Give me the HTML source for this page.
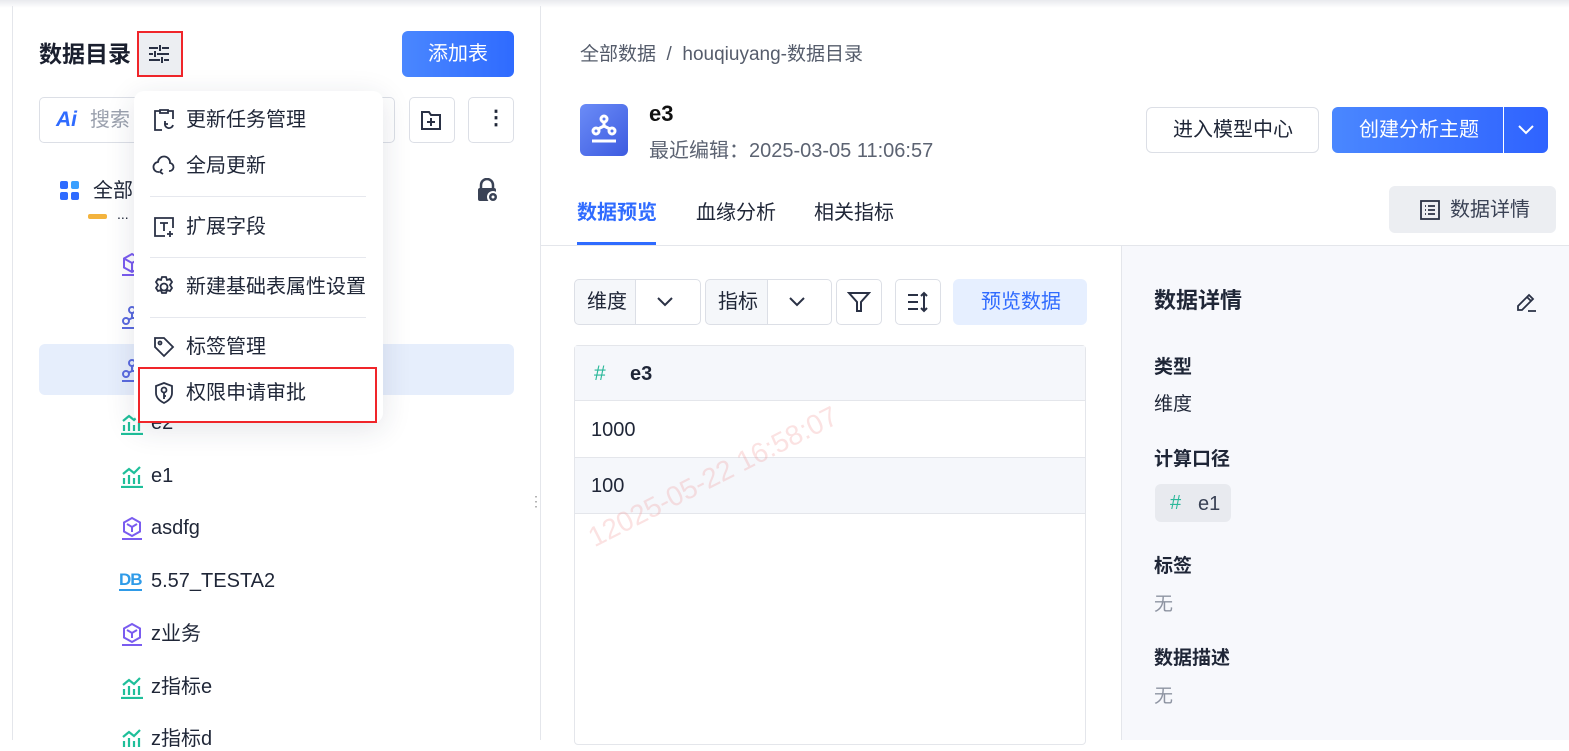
<!DOCTYPE html>
<html><head><meta charset="utf-8"><style>
*{margin:0;padding:0;box-sizing:border-box}
body{width:1569px;height:740px;overflow:hidden;background:#fff;font-family:"Liberation Sans","Noto Sans CJK SC",sans-serif;color:#1f2637;position:relative}
.a{position:absolute}
.t{position:absolute;white-space:nowrap;line-height:1}
.btn{position:absolute;border:1px solid #dcdfe6;border-radius:5px;background:#fff}
svg{position:absolute}
</style></head><body>
<div class="a" style="left:0;top:0;width:1569px;height:8px;background:linear-gradient(#e9eaee,#fff)"></div>
<div class="a" style="left:12px;top:6px;width:1px;height:734px;background:#e4e6eb"></div>
<div class="a" style="left:540px;top:6px;width:1px;height:734px;background:#e4e6eb"></div>

<div class="t" style="left:39px;top:43px;font-size:23px;font-weight:bold;color:#1a1f2e">数据目录</div>
<div class="a" style="left:137px;top:31px;width:46px;height:46px;background:#eceef2;border:2px solid #f0252a"></div>
<svg style="left:147px;top:42px" width="24" height="24" viewBox="0 0 24 24" fill="none" stroke="#2a3145" stroke-width="2"><path d="M2 6h9M15 6h7M13 3v6M2 12h4M10 12h12M8 9v6M2 18h11M17 18h5M15 15v6"/></svg>
<div class="a" style="left:402px;top:31px;width:112px;height:46px;border-radius:6px;background:linear-gradient(90deg,#4a87ff,#2f6bff)"></div>
<div class="t" style="left:428px;top:44px;font-size:20px;color:#fff">添加表</div>

<div class="btn" style="left:39px;top:97px;width:356px;height:46px"></div>
<div class="t" style="left:56px;top:109px;font-size:21px;font-weight:bold;font-style:italic;color:#2f6bff">Ai</div>
<div class="t" style="left:90px;top:110px;font-size:20px;color:#9aa0ad">搜索</div>
<div class="btn" style="left:409px;top:97px;width:46px;height:46px"></div>
<svg style="left:420px;top:109px" width="22" height="22" viewBox="0 0 22 22" fill="none" stroke="#2a3145" stroke-width="2"><path d="M2 3h7l2 3h9v14H2z M11 9v8M7 13h8"/></svg>
<div class="btn" style="left:468px;top:97px;width:46px;height:46px"></div>
<div class="t" style="left:486px;top:108px;font-size:20px;font-weight:bold">⋮</div>

<div class="a" style="left:60px;top:181px;width:8px;height:8px;background:#2f6bff;border-radius:2px;box-shadow:11px 0 0 #3aa0ff,0 11px 0 #2f6bff,11px 11px 0 #2f6bff"></div>
<div class="t" style="left:93px;top:181px;font-size:20px">全部</div>
<svg style="left:475px;top:178px" width="26" height="26" viewBox="0 0 26 26"><path d="M6 10V7a6 6 0 0112 0v3" fill="none" stroke="#3a4255" stroke-width="2.5"/><rect x="3" y="10" width="18" height="13" rx="2" fill="#3a4255"/><circle cx="18" cy="19" r="6" fill="#fff"/><circle cx="18" cy="19" r="4" fill="#3a4255"/><circle cx="18" cy="19" r="1.5" fill="#fff"/></svg>
<div class="a" style="left:88px;top:214px;width:19px;height:5px;background:#f3b33d;border-radius:2px"></div>
<div class="t" style="left:117px;top:207px;font-size:14px">...</div>

<div class="a" style="left:39px;top:344px;width:475px;height:51px;background:#e6eefc;border-radius:6px"></div>

<div class="t" style="left:151px;top:413px;font-size:20px">e2</div>
<div class="t" style="left:151px;top:466px;font-size:20px">e1</div>
<div class="t" style="left:151px;top:518px;font-size:20px">asdfg</div>
<div class="t" style="left:151px;top:571px;font-size:20px">5.57_TESTA2</div>
<div class="t" style="left:151px;top:624px;font-size:20px">z业务</div>
<div class="t" style="left:151px;top:677px;font-size:20px">z指标e</div>
<div class="t" style="left:151px;top:729px;font-size:20px">z指标d</div>
<svg style="left:120px;top:252px" width="24" height="24" viewBox="0 0 24 24" fill="none" stroke="#7a5cf0" stroke-width="2"><path d="M12 2l8 4.5v9L12 20l-8-4.5v-9z M4 6.5l8 4.5 8-4.5M12 11v9"/><path d="M2 23h20"/></svg>
<svg style="left:120px;top:305px" width="24" height="24" viewBox="0 0 24 24" fill="none" stroke="#5a6adf" stroke-width="2"><circle cx="12" cy="5" r="3"/><circle cx="6" cy="16" r="3"/><path d="M12 8v5l-4 2M12 13h5"/><path d="M2 23h20"/></svg>
<svg style="left:120px;top:358px" width="24" height="24" viewBox="0 0 24 24" fill="none" stroke="#5a6adf" stroke-width="2"><circle cx="12" cy="5" r="3"/><circle cx="6" cy="16" r="3"/><path d="M12 8v5l-4 2M12 13h5"/><path d="M2 23h20"/></svg>
<svg style="left:120px;top:411px" width="24" height="24" viewBox="0 0 24 24" fill="none" stroke="#1fbf9a" stroke-width="2.2"><path d="M4 20v-6M9 20v-9M14 20v-6M19 20v-9M3 10l6-5 5 4 6-6"/><path d="M1 23h22"/></svg>
<svg style="left:120px;top:464px" width="24" height="24" viewBox="0 0 24 24" fill="none" stroke="#1fbf9a" stroke-width="2.2"><path d="M4 20v-6M9 20v-9M14 20v-6M19 20v-9M3 10l6-5 5 4 6-6"/><path d="M1 23h22"/></svg>
<svg style="left:120px;top:516px" width="24" height="24" viewBox="0 0 24 24" fill="none" stroke="#7a5cf0" stroke-width="2"><path d="M12 2l8 4.5v9L12 20l-8-4.5v-9z M7 8l5 3 5-3M12 11v5"/><path d="M2 23h20"/></svg>
<div class="t" style="left:119px;top:571px;font-size:17px;font-weight:bold;color:#2f9be8;letter-spacing:-1px;border-bottom:2px solid #2f9be8;padding-bottom:1px">DB</div>
<svg style="left:120px;top:622px" width="24" height="24" viewBox="0 0 24 24" fill="none" stroke="#7a5cf0" stroke-width="2"><path d="M12 2l8 4.5v9L12 20l-8-4.5v-9z M7 8l5 3 5-3M12 11v5"/><path d="M2 23h20"/></svg>
<svg style="left:120px;top:675px" width="24" height="24" viewBox="0 0 24 24" fill="none" stroke="#1fbf9a" stroke-width="2.2"><path d="M4 20v-6M9 20v-9M14 20v-6M19 20v-9M3 10l6-5 5 4 6-6"/><path d="M1 23h22"/></svg>
<svg style="left:120px;top:727px" width="24" height="24" viewBox="0 0 24 24" fill="none" stroke="#1fbf9a" stroke-width="2.2"><path d="M4 20v-6M9 20v-9M14 20v-6M19 20v-9M3 10l6-5 5 4 6-6"/></svg>
<div class="t" style="left:529px;top:494px;font-size:14px;color:#999">⋮</div>

<div class="a" style="left:134px;top:91px;width:249px;height:332px;background:#fff;border-radius:10px;box-shadow:0 6px 30px rgba(30,40,70,.12)"></div>
<div class="a" style="left:150px;top:196px;width:216px;height:1px;background:#e6e8ee"></div>
<div class="a" style="left:150px;top:257px;width:216px;height:1px;background:#e6e8ee"></div>
<div class="a" style="left:150px;top:317px;width:216px;height:1px;background:#e6e8ee"></div>
<div class="t" style="left:186px;top:110px;font-size:20px">更新任务管理</div>
<div class="t" style="left:186px;top:156px;font-size:20px">全局更新</div>
<div class="t" style="left:186px;top:217px;font-size:20px">扩展字段</div>
<div class="t" style="left:186px;top:277px;font-size:20px">新建基础表属性设置</div>
<div class="t" style="left:186px;top:337px;font-size:20px">标签管理</div>
<div class="t" style="left:186px;top:383px;font-size:20px">权限申请审批</div>
<svg style="left:152px;top:108px" width="24" height="24" viewBox="0 0 24 24" fill="none" stroke="#2a3145" stroke-width="1.8"><path d="M8 3H3v19h7M16 3h5v8M8 2h8v3H8z"/><path d="M13 15a4 4 0 108 2M13 13v3h3"/></svg>
<svg style="left:152px;top:154px" width="24" height="24" viewBox="0 0 24 24" fill="none" stroke="#2a3145" stroke-width="1.8"><path d="M7 18a5 5 0 01-1-10 6 6 0 0112 1 4 4 0 01-1 8"/><path d="M10 15l-2 3 3 2"/></svg>
<svg style="left:152px;top:215px" width="24" height="24" viewBox="0 0 24 24" fill="none" stroke="#2a3145" stroke-width="1.8"><path d="M13 21H3V3h18v10M8 8h8M12 8v8M18 16v6M15 19h6"/></svg>
<svg style="left:152px;top:275px" width="24" height="24" viewBox="0 0 24 24" fill="none" stroke="#2a3145" stroke-width="1.8"><circle cx="12" cy="12" r="3.5"/><path d="M10 2h4l1 3 3-1 2 3-2 3 2 3-2 3-3-1-1 3h-4l-1-3-3 1-2-3 2-3-2-3 2-3 3 1z"/></svg>
<svg style="left:152px;top:335px" width="24" height="24" viewBox="0 0 24 24" fill="none" stroke="#2a3145" stroke-width="1.8"><path d="M3 3h9l9 9-9 9-9-9z"/><circle cx="8" cy="8" r="1.5"/></svg>
<svg style="left:152px;top:381px" width="24" height="24" viewBox="0 0 24 24" fill="none" stroke="#2a3145" stroke-width="1.8"><path d="M12 2l8 3v7c0 5-4 8-8 10-4-2-8-5-8-10V5z"/><circle cx="12" cy="9" r="2.5"/><path d="M12 11.5V18M12 15h2"/></svg>
<div class="a" style="left:138px;top:367px;width:239px;height:56px;border:2px solid #f0252a"></div>

<div class="t" style="left:580px;top:45px;font-size:19px;color:#555c6b">全部数据 &nbsp;/&nbsp; houqiuyang-数据目录</div>
<div class="a" style="left:580px;top:104px;width:48px;height:52px;border-radius:6px;background:linear-gradient(135deg,#6b8cf7,#3d5be0)"></div>
<svg style="left:580px;top:104px" width="48" height="52" viewBox="0 0 48 52" fill="none" stroke="#fff" stroke-width="3"><circle cx="24" cy="15" r="3"/><circle cx="16" cy="27" r="3"/><circle cx="32" cy="27" r="3"/><path d="M24 18v4l-6 3M24 22l6 3M12 37h24"/></svg>
<div class="t" style="left:649px;top:103px;font-size:22px;font-weight:bold;color:#111">e3</div>
<div class="t" style="left:649px;top:141px;font-size:20px;color:#5c6372">最近编辑：2025-03-05 11:06:57</div>

<div class="btn" style="left:1146px;top:107px;width:173px;height:46px;border-radius:6px"></div>
<div class="t" style="left:1173px;top:120px;font-size:20px">进入模型中心</div>
<div class="a" style="left:1332px;top:107px;width:216px;height:46px;border-radius:6px;background:linear-gradient(90deg,#4a87ff,#2f63ff)"></div>
<div class="a" style="left:1503px;top:107px;width:1px;height:46px;background:#fff"></div>
<div class="t" style="left:1359px;top:120px;font-size:20px;color:#fff">创建分析主题</div>
<svg style="left:1516px;top:122px" width="20" height="16" viewBox="0 0 20 16" fill="none" stroke="#fff" stroke-width="2"><path d="M3 4l7 7 7-7"/></svg>

<div class="t" style="left:577px;top:203px;font-size:20px;font-weight:bold;color:#2f6bff">数据预览</div>
<div class="a" style="left:577px;top:242px;width:79px;height:3px;background:#2f6bff"></div>
<div class="t" style="left:696px;top:203px;font-size:20px">血缘分析</div>
<div class="t" style="left:814px;top:203px;font-size:20px">相关指标</div>
<div class="a" style="left:1389px;top:186px;width:167px;height:47px;border-radius:6px;background:#eceef2"></div>
<svg style="left:1419px;top:199px" width="22" height="22" viewBox="0 0 22 22" fill="none" stroke="#2a3145" stroke-width="1.8"><rect x="2" y="2" width="18" height="18"/><path d="M6 7h1M6 11h1M6 15h1M9 7h7M9 11h7M9 15h7"/></svg>
<div class="t" style="left:1450px;top:200px;font-size:20px;color:#3a4255">数据详情</div>
<div class="a" style="left:540px;top:245px;width:1029px;height:1px;background:#e4e6eb"></div>

<div class="btn" style="left:574px;top:279px;width:127px;height:46px;background:linear-gradient(90deg,#f5f7fa 61px,#fff 61px)"></div>
<div class="a" style="left:635px;top:280px;width:1px;height:44px;background:#dcdfe6"></div>
<div class="t" style="left:587px;top:292px;font-size:20px">维度</div>
<svg style="left:655px;top:294px" width="20" height="16" viewBox="0 0 20 16" fill="none" stroke="#2a3145" stroke-width="2"><path d="M3 4l7 7 7-7"/></svg>
<div class="btn" style="left:705px;top:279px;width:127px;height:46px;background:linear-gradient(90deg,#f5f7fa 62px,#fff 62px)"></div>
<div class="a" style="left:767px;top:280px;width:1px;height:44px;background:#dcdfe6"></div>
<div class="t" style="left:718px;top:292px;font-size:20px">指标</div>
<svg style="left:787px;top:294px" width="20" height="16" viewBox="0 0 20 16" fill="none" stroke="#2a3145" stroke-width="2"><path d="M3 4l7 7 7-7"/></svg>
<div class="btn" style="left:836px;top:279px;width:46px;height:46px"></div>
<svg style="left:847px;top:291px" width="24" height="22" viewBox="0 0 24 22" fill="none" stroke="#2a3145" stroke-width="2"><path d="M2 2h20l-8 9v9h-4v-9z"/></svg>
<div class="btn" style="left:895px;top:279px;width:46px;height:46px"></div>
<svg style="left:906px;top:291px" width="24" height="22" viewBox="0 0 24 22" fill="none" stroke="#2a3145" stroke-width="2"><path d="M2 4h10M2 11h10M2 18h10M18 2v18M15 5l3-3 3 3M15 17l3 3 3-3"/></svg>
<div class="a" style="left:953px;top:279px;width:134px;height:46px;border-radius:6px;background:#e6efff"></div>
<div class="t" style="left:981px;top:292px;font-size:20px;color:#2f6bff">预览数据</div>

<div class="a" style="left:574px;top:345px;width:512px;height:400px;border:1px solid #e4e6eb;border-radius:4px"></div>
<div class="a" style="left:575px;top:346px;width:510px;height:55px;background:#f5f7fb;border-bottom:1px solid #e4e6eb"></div>
<div class="a" style="left:575px;top:457px;width:510px;height:57px;background:#f5f7fb;border-top:1px solid #e4e6eb;border-bottom:1px solid #e4e6eb"></div>
<div class="t" style="left:594px;top:363px;font-size:21px;color:#2bb89a">#</div>
<div class="t" style="left:630px;top:364px;font-size:20px;font-weight:bold">e3</div>
<div class="t" style="left:591px;top:420px;font-size:20px">1000</div>
<div class="t" style="left:591px;top:476px;font-size:20px">100</div>
<div class="t" style="left:584px;top:527px;font-size:28px;color:rgba(240,140,140,.25);transform:rotate(-27deg);transform-origin:0 0">12025-05-22 16:58:07</div>

<div class="a" style="left:1121px;top:246px;width:448px;height:494px;background:#f7f8fc;border-left:1px solid #e4e6eb"></div>
<div class="t" style="left:1154px;top:290px;font-size:22px;font-weight:bold">数据详情</div>
<svg style="left:1514px;top:290px" width="24" height="24" viewBox="0 0 24 24" fill="none" stroke="#2a3145" stroke-width="1.8"><path d="M4 20v-4L15 5l4 4L8 20zM13 7l4 4M14 21h8"/></svg>
<div class="t" style="left:1154px;top:358px;font-size:19px;font-weight:bold">类型</div>
<div class="t" style="left:1154px;top:395px;font-size:19px">维度</div>
<div class="t" style="left:1154px;top:450px;font-size:19px;font-weight:bold">计算口径</div>
<div class="a" style="left:1155px;top:484px;width:76px;height:38px;border-radius:6px;background:#e8eaef"></div>
<div class="t" style="left:1170px;top:493px;font-size:20px;color:#2bb89a">#</div>
<div class="t" style="left:1198px;top:494px;font-size:20px;color:#3a4255">e1</div>
<div class="t" style="left:1154px;top:557px;font-size:19px;font-weight:bold">标签</div>
<div class="t" style="left:1154px;top:595px;font-size:19px;color:#8e94a2">无</div>
<div class="t" style="left:1154px;top:649px;font-size:19px;font-weight:bold">数据描述</div>
<div class="t" style="left:1154px;top:687px;font-size:19px;color:#8e94a2">无</div>
</body></html>
